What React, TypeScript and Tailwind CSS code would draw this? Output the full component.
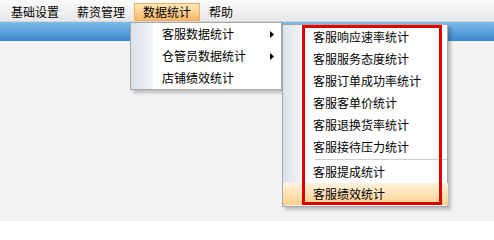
import React from 'react';

const topMenus = ['基础设置', '薪资管理', '数据统计', '帮助'];

const statMenu = [
  { label: '客服数据统计', sub: true },
  { label: '仓管员数据统计', sub: true },
  { label: '店铺绩效统计', sub: false },
];

const serviceMenu = [
  '客服响应速率统计',
  '客服服务态度统计',
  '客服订单成功率统计',
  '客服客单价统计',
  '客服退换货率统计',
  '客服接待压力统计',
];

function Arrow() {
  return (
    <svg width="4" height="7" viewBox="0 0 4 7" className="block">
      <path d="M0 0 L4 3.5 L0 7 Z" fill="#000" />
    </svg>
  );
}

export default function App() {
  return (
    <div
      className="relative w-[494px] h-[221px] overflow-hidden bg-[#f3f3f3] text-[12px] leading-none text-black"
      style={{ fontFamily: '"Noto Sans CJK SC", "Liberation Sans", sans-serif' }}
    >
      {/* menu bar */}
      <div className="flex h-[21px] pt-[3px] pl-[2px] bg-gradient-to-b from-[#fbfbfb] to-[#e8e8e8]">
        {topMenus.map((m) => (
          <div
            key={m}
            className={
              m === '数据统计'
                ? 'h-[18px] px-[8px] flex items-center bg-gradient-to-b from-[#ffe9b8] to-[#f7b866] border border-[#f0b060]'
                : 'h-[18px] px-[8px] flex items-center border border-transparent'
            }
          >
            {m}
          </div>
        ))}
      </div>
      <div className="h-px bg-[#d6d6d6]" />
      {/* blue band */}
      <div className="h-[19px] bg-gradient-to-b from-[#7cbbea] to-[#3b89cf]" />

      {/* 数据统计 dropdown */}
      <div className="absolute left-[130px] top-[22px] w-[152px] flex bg-white border border-[#a7a7a7] shadow-[3px_3px_3px_rgba(0,0,0,0.22)]">
        <div className="w-[22px] bg-gradient-to-r from-[#dbe2ea] to-[#f3f5f8]" />
        <div className="flex-1 flex flex-col">
          {statMenu.map((it) => (
            <div key={it.label} className="h-[22px] flex items-center pl-[9px] pr-[7px]">
              <span className="flex-1">{it.label}</span>
              {it.sub && <Arrow />}
            </div>
          ))}
        </div>
      </div>

      {/* 客服数据统计 submenu */}
      <div className="absolute left-[282px] top-[24px] w-[166px] flex bg-white border border-[#a7a7a7] shadow-[3px_3px_3px_rgba(0,0,0,0.22)]">
        <div className="w-[18px] bg-gradient-to-r from-[#dbe2ea] to-[#f3f5f8]" />
        <div className="flex-1 flex flex-col py-[1px]">
          {serviceMenu.map((t) => (
            <div key={t} className="h-[22px] flex items-center pl-[12px]">
              {t}
            </div>
          ))}
          <div className="h-[3px] flex items-center pl-[14px]">
            <div className="h-px w-full bg-[#cfcfcf]" />
          </div>
          <div className="h-[22px] flex items-center pl-[12px]">客服提成统计</div>
          <div className="h-[22px] flex items-center pl-[12px] -ml-[18px] -mr-px pl-[30px] bg-gradient-to-b from-[#fff3de] to-[#ffcf8c]">
            客服绩效统计
          </div>
        </div>
      </div>

      {/* red annotation frame */}
      <div className="absolute left-[302px] top-[25px] w-[140px] h-[180px] border-[3px] border-[#e00000]" />
    </div>
  );
}
